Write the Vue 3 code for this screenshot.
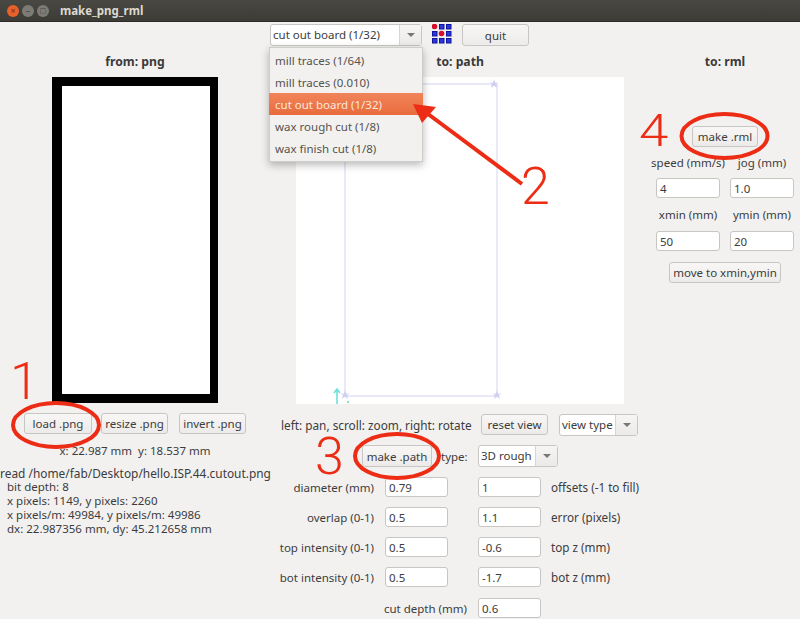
<template>
  <div class="window">
    <div class="titlebar">
      <div class="lights">
        <span class="light close">×</span>
        <span class="light">–</span>
        <span class="light">□</span>
      </div>
      <span class="title">make_png_rml</span>
    </div>

    <div class="toprow">
      <div class="combo machine">
        <span class="combo-value">cut out board (1/32)</span>
        <span class="combo-arrow"><i></i></span>
      </div>
      <svg class="logo" width="20" height="20" viewBox="0 0 20 20">
        <template v-for="cell in logoCells" :key="cell.x + '-' + cell.y">
          <circle v-if="cell.red" :cx="cell.x + 2.5" :cy="cell.y + 2.5" r="2.8" fill="#d4102a" />
          <rect v-else :x="cell.x + 0.5" :y="cell.y + 0.5" width="4.5" height="4.5" fill="#2a38d8" stroke="#10149c" />
        </template>
      </svg>
      <button class="btn quit">quit</button>
    </div>

    <div class="columns">
      <section class="col left">
        <h2>from: png</h2>
        <div class="board"><div class="board-inner"></div></div>
        <div class="btn-row">
          <button class="btn load">load .png</button>
          <button class="btn resize">resize .png</button>
          <button class="btn invert">invert .png</button>
        </div>
        <div class="coords">x: 22.987 mm&nbsp; y: 18.537 mm</div>
        <div class="info">
          <div class="info-first">read /home/fab/Desktop/hello.ISP.44.cutout.png</div>
          <div v-for="line in infoLines" :key="line" class="info-line">{{ line }}</div>
        </div>
      </section>

      <section class="col center">
        <h2>to: path</h2>
        <div class="canvas">
          <svg width="328" height="327" viewBox="0 0 328 327">
            <rect x="49" y="7" width="152" height="312" fill="none" stroke="#d3d3f0" stroke-width="1" />
            <path v-for="s in stars" :key="s" :transform="s" class="star" d="M0-4.5 1.2-1.3 4.5-1.5 2-0 3.2 3.8 0 1.8-3.2 3.8-2 0-4.5-1.5-1.2-1.3Z" />
            <path d="M41 327V313M38 316l3-4 3 4" fill="none" stroke="#6fe0dc" stroke-width="1.6" />
            <circle cx="52" cy="325" r="1" fill="#7fd08a" />
          </svg>
        </div>
        <div class="view-row">
          <span class="hint">left: pan, scroll: zoom, right: rotate</span>
          <button class="btn reset">reset view</button>
          <div class="combo view-type">
            <span class="combo-value">view type</span>
            <span class="combo-arrow"><i></i></span>
          </div>
        </div>
        <div class="path-row">
          <button class="btn make-path">make .path</button>
          <span class="type-label">type:</span>
          <div class="combo rough">
            <span class="combo-value">3D rough</span>
            <span class="combo-arrow"><i></i></span>
          </div>
        </div>
        <div class="form">
          <template v-for="row in pathRows" :key="row.left">
            <label class="lab-l">{{ row.left }}</label>
            <input class="field" :value="row.a" readonly />
            <input class="field field-b" :value="row.b" readonly />
            <label class="lab-r">{{ row.right }}</label>
          </template>
        </div>
        <div class="depth-row">
          <label>cut depth (mm)</label>
          <input class="field" value="0.6" readonly />
        </div>
      </section>

      <section class="col right">
        <h2>to: rml</h2>
        <button class="btn make-rml">make .rml</button>
        <div class="rml-grid">
          <label class="first">speed (mm/s)</label>
          <label class="first">jog (mm)</label>
          <input class="field" value="4" readonly />
          <input class="field" value="1.0" readonly />
          <label>xmin (mm)</label>
          <label>ymin (mm)</label>
          <input class="field" value="50" readonly />
          <input class="field" value="20" readonly />
        </div>
        <button class="btn move">move to xmin,ymin</button>
      </section>
    </div>

    <!-- open dropdown -->
    <ul class="menu">
      <li v-for="item in menuItems" :key="item" :class="{ active: item === selected }">{{ item }}</li>
    </ul>

    <!-- red annotations drawn over the screenshot -->
    <svg class="marks" width="800" height="619" viewBox="0 0 800 619">
      <ellipse cx="56" cy="425" rx="43" ry="22" />
      <ellipse cx="397" cy="456" rx="42" ry="22" />
      <ellipse cx="724.5" cy="136" rx="43" ry="22" />
      <path d="M522 184 424 111" />
      <polygon points="413,104 436,107 422,123" />
    </svg>
    <span class="digit d1">1</span>
    <span class="digit d2">2</span>
    <span class="digit d3">3</span>
    <span class="digit d4">4</span>
  </div>
</template>

<script setup>
const selected = 'cut out board (1/32)'
const menuItems = [
  'mill traces (1/64)',
  'mill traces (0.010)',
  'cut out board (1/32)',
  'wax rough cut (1/8)',
  'wax finish cut (1/8)',
]
const infoLines = [
  'bit depth: 8',
  'x pixels: 1149, y pixels: 2260',
  'x pixels/m: 49984, y pixels/m: 49986',
  'dx: 22.987356 mm, dy: 45.212658 mm',
]
const pathRows = [
  { left: 'diameter (mm)', a: '0.79', b: '1', right: 'offsets (-1 to fill)' },
  { left: 'overlap (0-1)', a: '0.5', b: '1.1', right: 'error (pixels)' },
  { left: 'top intensity (0-1)', a: '0.5', b: '-0.6', right: 'top z (mm)' },
  { left: 'bot intensity (0-1)', a: '0.5', b: '-1.7', right: 'bot z (mm)' },
]
const stars = ['translate(198 7)', 'translate(201 318)', 'translate(49 318)']
const redCells = ['0-0', '7-7']
const logoCells = []
for (const y of [0, 7, 14]) {
  for (const x of [0, 7, 14]) {
    logoCells.push({ x, y, red: redCells.includes(x + '-' + y) })
  }
}
</script>

<style>
html, body { margin: 0; background: #f2f1f0; }
</style>

<style scoped>
.window {
  position: relative;
  width: 800px;
  height: 619px;
  overflow: hidden;
  background: #f2f1f0;
  color: #3c3c3c;
  font-family: "Noto Sans", sans-serif;
  font-size: 11.5px;
}
.titlebar {
  height: 22px;
  display: flex;
  align-items: center;
  background: linear-gradient(#4a4842, #3d3b36);
  border-bottom: 1px solid #2c2b28;
  box-sizing: border-box;
}
.lights { display: flex; gap: 3px; margin-left: 7px; width: 53px; }
.light {
  width: 12px;
  height: 12px;
  border-radius: 50%;
  background: #7c7b75;
  color: #45433e;
  font-size: 9px;
  line-height: 12px;
  text-align: center;
}
.light.close { background: #e8602c; color: #7a2a10; }
.title { color: #dcd9d1; font-size: 11.5px; font-weight: 700; }

.toprow {
  display: flex;
  align-items: flex-start;
  height: 25px;
  padding: 2px 0 0 270px;
  box-sizing: border-box;
}
.logo { margin: 0 10px; }

.btn {
  display: block;
  box-sizing: border-box;
  height: 21px;
  padding: 0;
  border: 1px solid #c8c6c3;
  border-radius: 3px;
  background: linear-gradient(#f8f7f6, #ecebe9);
  color: #3c3c3c;
  font: inherit;
  text-align: center;
}
.quit { width: 67px; height: 22px; }

.combo {
  display: flex;
  box-sizing: border-box;
  height: 22px;
  border: 1px solid #c8c6c3;
  border-radius: 3px;
  background: #fff;
  line-height: 20px;
}
.combo-value { flex: 1; padding-left: 2px; white-space: nowrap; overflow: hidden; }
.combo-arrow {
  width: 21px;
  display: flex;
  align-items: center;
  justify-content: center;
  border-left: 1px solid #d8d6d3;
  background: linear-gradient(#f6f5f4, #ebeae8);
}
.combo-arrow i {
  border-left: 4px solid transparent;
  border-right: 4px solid transparent;
  border-top: 4px solid #777;
}
.machine { width: 152px; }

.columns {
  display: grid;
  grid-template-columns: 270px 380px 150px;
}
.col { display: flex; flex-direction: column; align-items: center; }
h2 {
  margin: 7px 0 8px;
  height: 15px;
  font-size: 12.2px;
  line-height: 15px;
  font-weight: 700;
  color: #3a3a3a;
}

.board {
  box-sizing: border-box;
  width: 166px;
  height: 326px;
  padding: 9px 8px 9px 10px;
  background: #000;
}
.board-inner { height: 100%; background: #fff; }
.btn-row { display: flex; align-items: center; width: 270px; margin-top: 10px; padding-left: 24px; box-sizing: border-box; }
.load { width: 68px; }
.resize { width: 67px; margin-left: 9px; }
.invert { width: 67px; margin-left: 11px; }
.coords { margin-top: 9px; height: 16px; line-height: 16px; }
.info { width: 270px; margin-top: 7px; line-height: 14px; }
.info-first { white-space: nowrap; font-size: 11.9px; }
.info-line { padding-left: 7px; white-space: nowrap; }

.canvas { width: 328px; height: 327px; background: #fff; }
.canvas svg { display: block; }
.star { fill: #cfcff2; }
.view-row {
  display: flex;
  align-items: center;
  width: 380px;
  margin-top: 10px;
  height: 21px;
}
.hint { width: 200px; margin-left: 11px; white-space: nowrap; font-size: 11.8px; }
.reset { width: 67px; }
.view-type { width: 79px; margin-left: 11px; }
.path-row {
  display: flex;
  align-items: center;
  width: 380px;
  height: 22px;
  margin-top: 10px;
  padding-left: 92px;
  box-sizing: border-box;
}
.make-path { width: 70px; height: 22px; }
.type-label { width: 37px; margin-left: 9px; }
.rough { width: 80px; }
.form {
  display: grid;
  grid-template-columns: 105px 63px 83px auto;
  grid-auto-rows: 20px;
  row-gap: 10px;
  column-gap: 10px;
  width: 380px;
  margin-top: 10px;
  align-items: center;
}
.lab-l { text-align: right; white-space: nowrap; margin-right: 1px; }
.lab-r { white-space: nowrap; font-size: 11.7px; }
.field-b { justify-self: end; }
.field {
  box-sizing: border-box;
  width: 63px;
  height: 20px;
  padding: 0 3px;
  border: 1px solid #c8c6c3;
  border-radius: 3px;
  background: #fff;
  color: #3c3c3c;
  font: inherit;
  outline: none;
}
.depth-row {
  display: flex;
  align-items: center;
  justify-content: flex-end;
  gap: 11px;
  width: 271px;
  height: 20px;
  margin-top: 11px;
  margin-left: -109px;
}

.make-rml { width: 66px; height: 21px; margin-top: 49px; }
.rml-grid {
  display: grid;
  grid-template-columns: 64px 64px;
  grid-template-rows: 23px 20px 33px 20px;
  column-gap: 10px;
  margin-top: 8px;
  justify-items: center;
  align-items: center;
}
.rml-grid label { white-space: nowrap; line-height: 16px; }
.rml-grid .first { align-self: start; }
.rml-grid .field { width: 64px; }
.move { width: 112px; margin-top: 11px; }

.menu {
  position: absolute;
  left: 269px;
  top: 47px;
  width: 154px;
  box-sizing: border-box;
  margin: 0;
  padding: 1px 0 2px;
  list-style: none;
  background: #f2f1ef;
  border: 1px solid #cfcdca;
  box-shadow: 0 3px 8px rgba(0, 0, 0, 0.28);
}
.menu li {
  height: 22px;
  line-height: 23px;
  padding-left: 5px;
  color: #55534f;
}
.menu li.active {
  margin: 0 -1px;
  padding-left: 6px;
  background: linear-gradient(#f0845a, #e96c3c);
  color: #fbe8dc;
}

.marks { position: absolute; left: 0; top: 0; pointer-events: none; }
.marks ellipse, .marks path { fill: none; stroke: #ec2c14; stroke-width: 4; }
.marks polygon { fill: #ec2c14; }
.digit {
  position: absolute;
  color: #ec2c14;
  font-family: Roboto, "Liberation Sans", sans-serif;
  font-weight: 300;
  font-size: 52px;
  line-height: 38px;
}
.d1 { left: 10px; top: 363px; }
.d2 { left: 521px; top: 168px; }
.d3 { left: 315px; top: 438px; }
.d4 { left: 639px; top: 116px; font-size: 44px; line-height: 30px; transform: scaleX(1.2); transform-origin: left center; }
</style>
